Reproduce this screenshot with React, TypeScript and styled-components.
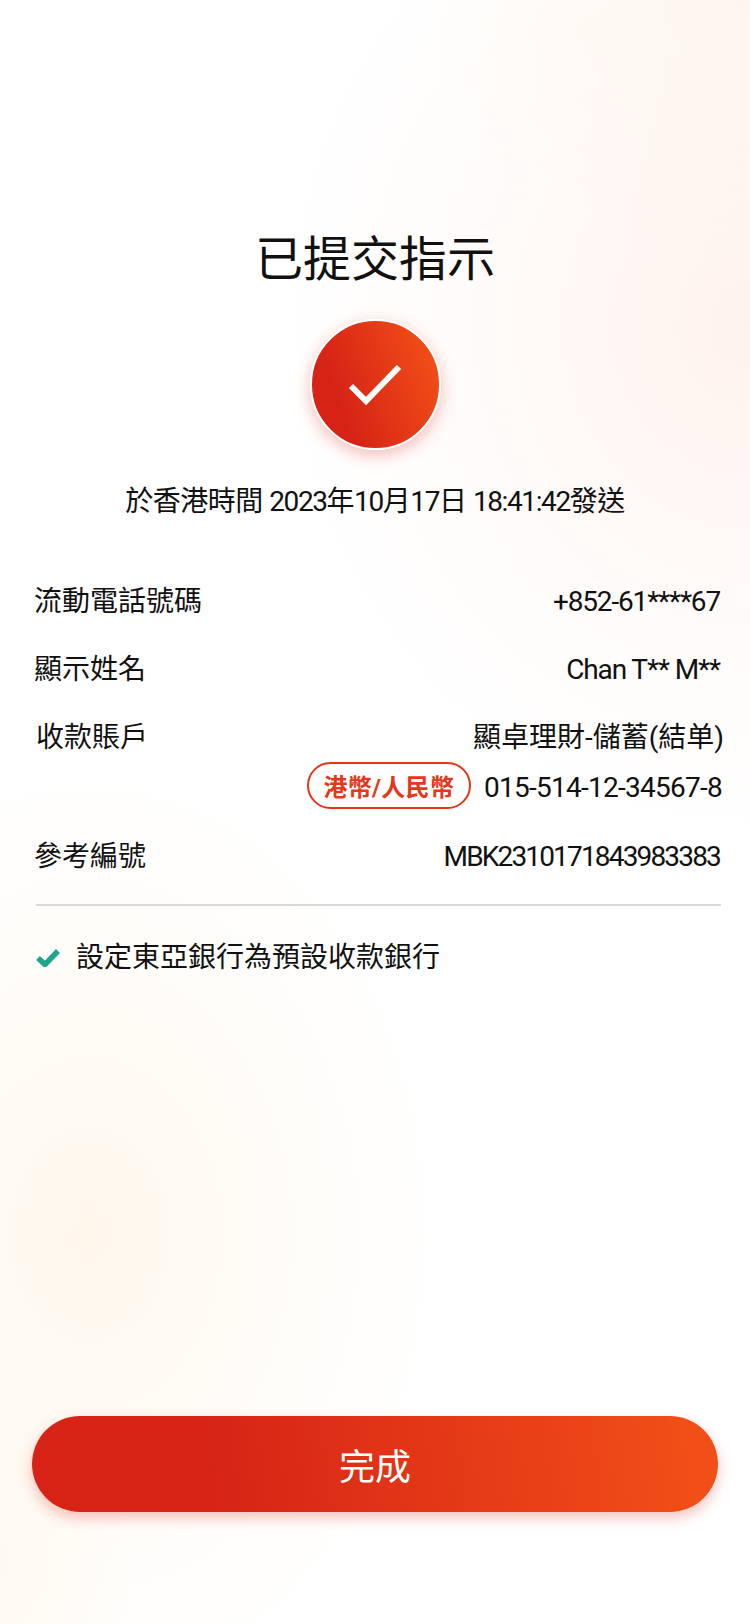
import React, { FC } from 'react';
import styled, { createGlobalStyle } from 'styled-components';

const GlobalStyle = createGlobalStyle`
  html, body {
    margin: 0;
    padding: 0;
    background: #ffffff;
  }
  * {
    box-sizing: border-box;
  }
`;

const Page = styled.div`
  width: 750px;
  height: 1624px;
  padding: 226px 0 112px;
  display: flex;
  flex-direction: column;
  overflow: hidden;
  font-family: Roboto, "Noto Sans CJK TC", sans-serif;
  color: #111111;
  background:
    radial-gradient(ellipse 480px 520px at 100% 20%, rgba(255, 232, 224, 0.55), rgba(255, 242, 236, 0.3) 55%, rgba(255, 255, 255, 0) 100%),
    radial-gradient(ellipse 340px 260px at 100% 0%, rgba(255, 240, 228, 0.55), rgba(255, 255, 255, 0) 100%),
    radial-gradient(ellipse 360px 480px at 12% 76%, rgba(255, 245, 230, 0.75), rgba(255, 248, 238, 0.35) 60%, rgba(255, 255, 255, 0) 100%),
    radial-gradient(ellipse 140px 260px at 0% 96%, rgba(255, 243, 228, 0.5), rgba(255, 255, 255, 0) 100%),
    #ffffff;
`;

const Title = styled.h1`
  margin: 0;
  font-size: 48px;
  font-weight: 400;
  line-height: 68px;
  text-align: center;
`;

const Badge = styled.div`
  width: 131px;
  height: 131px;
  margin: 25px auto 0;
  flex: none;
  display: flex;
  align-items: center;
  justify-content: center;
  border: 2px solid #ffffff;
  border-radius: 50%;
  background: linear-gradient(70deg, #d62316 25%, #f14e18 90%);
  box-shadow: 0 5px 16px rgba(214, 35, 22, 0.3);
`;

const SentAt = styled.p`
  margin: 32px 0 0;
  font-size: 28px;
  line-height: 40px;
  letter-spacing: -0.5px;
  text-align: center;
`;

const Latin = styled.span`
  letter-spacing: -1.4px;
`;

const Details = styled.div`
  margin-top: 60px;
  padding: 0 30px 0 34px;
  display: flex;
  flex-direction: column;
  gap: 28px;
`;

const Row = styled.div`
  display: flex;
  justify-content: space-between;
  align-items: flex-start;
`;

const Label = styled.span<{ $inset?: boolean }>`
  font-size: 28px;
  line-height: 40px;
  margin-left: ${({ $inset }) => ($inset ? '2px' : '0')};
`;

const ValueStack = styled.div`
  display: flex;
  flex-direction: column;
  align-items: flex-end;
  gap: 4px;
`;

const Value = styled.span<{ $spacing: number }>`
  font-size: 28px;
  line-height: 40px;
  letter-spacing: ${({ $spacing }) => $spacing}px;
`;

const AccountName = styled.span`
  font-size: 28px;
  line-height: 40px;
  margin-right: -4px;
`;

const AccountLine = styled.div`
  display: flex;
  align-items: flex-start;
  gap: 13px;
  margin-right: -2px;
`;

const AccountNumber = styled(Value)`
  margin-top: 6px;
`;

const Pill = styled.span`
  height: 47px;
  width: 164px;
  display: flex;
  align-items: center;
  justify-content: center;
  border: 2px solid #e5341a;
  border-radius: 24px;
  font-size: 24px;
  font-weight: 700;
  letter-spacing: 0.3px;
  color: #e5381a;
  background: #ffffff;
`;

const Divider = styled.hr`
  margin: 27px 29px 0 36px;
  height: 2px;
  border: 0;
  background: #d9d9d9;
`;

const Preference = styled.div`
  margin: 32px 0 0 36px;
  display: flex;
  align-items: center;
  gap: 16px;
  font-size: 28px;
  line-height: 40px;
`;

const FinishButton = styled.button`
  width: 686px;
  height: 96px;
  margin: auto 0 0 32px;
  flex: none;
  border: 0;
  border-radius: 48px;
  font-family: inherit;
  font-size: 36px;
  color: #ffffff;
  background: linear-gradient(82deg, #d62316 25%, #f14e18 95%);
  box-shadow: 0 6px 14px rgba(214, 35, 22, 0.28);
`;

const App: FC = () => (
  <Page>
    <GlobalStyle />
    <Title>已提交指示</Title>
    <Badge>
      <svg width="54" height="42" viewBox="0 0 54 42" fill="none">
        <path d="M3 22L18 37L51 3" stroke="#ffffff" strokeWidth="6" />
      </svg>
    </Badge>
    <SentAt>
      於香港時間 <Latin>2023</Latin>年<Latin>10</Latin>月<Latin>17</Latin>日 <Latin>18:41:42</Latin>發送
    </SentAt>
    <Details>
      <Row>
        <Label>流動電話號碼</Label>
        <Value $spacing={-1.15}>+852-61****67</Value>
      </Row>
      <Row>
        <Label>顯示姓名</Label>
        <Value $spacing={-1.1}>Chan T** M**</Value>
      </Row>
      <Row>
        <Label $inset>收款賬戶</Label>
        <ValueStack>
          <AccountName>顯卓理財-儲蓄(結单)</AccountName>
          <AccountLine>
            <Pill>港幣/人民幣</Pill>
            <AccountNumber $spacing={-0.73}>015-514-12-34567-8</AccountNumber>
          </AccountLine>
        </ValueStack>
      </Row>
      <Row>
        <Label>參考編號</Label>
        <Value $spacing={-1.83}>MBK2310171843983383</Value>
      </Row>
    </Details>
    <Divider />
    <Preference>
      <svg width="24" height="18" viewBox="0 0 24 18" fill="none">
        <path d="M2 9L9 15.5L22 2" stroke="#1fa58b" strokeWidth="5.5" />
      </svg>
      設定東亞銀行為預設收款銀行
    </Preference>
    <FinishButton>完成</FinishButton>
  </Page>
);

export default App;
